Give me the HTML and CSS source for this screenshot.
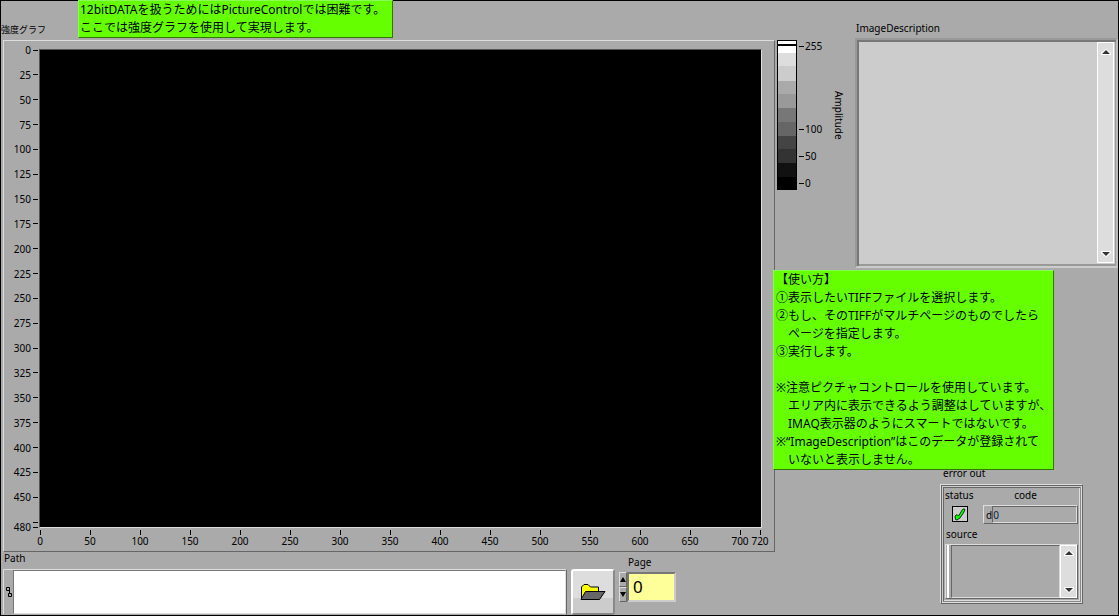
FILE: index.html
```html
<!DOCTYPE html>
<html lang="ja">
<head>
<meta charset="utf-8">
<title>TIFF Viewer</title>
<link rel="stylesheet" href="styles.css">
</head>
<body>
<main class="panel">
  <section class="main">
    <h1 class="graph-title">強度グラフ</h1>
    <div class="graph">
      <div class="y-axis">
        <span>0</span><span>25</span><span>50</span><span>75</span><span>100</span><span>125</span><span>150</span><span>175</span><span>200</span><span>225</span><span>250</span><span>275</span><span>300</span><span>325</span><span>350</span><span>375</span><span>400</span><span>425</span><span>450</span><span></span><span>480</span>
      </div>
      <div class="plot"></div>
      <div class="x-axis">
        <span>0</span><span>50</span><span>100</span><span>150</span><span>200</span><span>250</span><span>300</span><span>350</span><span>400</span><span>450</span><span>500</span><span>550</span><span>600</span><span>650</span><span>700</span><span>720</span>
      </div>
    </div>
    <div class="controls">
      <div class="path-field">
        <label for="path">Path</label>
        <div class="path-box">
          <svg class="path-icon" width="8" height="12" viewBox="0 0 8 12" fill="none" stroke="#000"><path d="M1.5 1.5h3v3h-3zM3.5 7.5h3v3h-3zM4.5 3.5v4"/></svg>
          <input id="path" type="text">
        </div>
      </div>
      <button class="browse" type="button" aria-label="Browse">
        <svg width="26" height="18" viewBox="0 0 26 18" stroke="#000"><path fill="#ff0" d="M1.500 16V4L4 1.500h4L10.500 4h8v5"/><path fill="#666" d="M1 16.500L5.500 8.500H25L19.500 16.500z"/></svg>
      </button>
      <div class="page-field">
        <label for="page">Page</label>
        <div class="spinner">
          <div class="steps">
            <button type="button" aria-label="Increase"><svg width="6" height="5" viewBox="0 0 6 5"><path d="M3 0L6 5H0z"/></svg></button>
            <button type="button" aria-label="Decrease"><svg width="6" height="5" viewBox="0 0 6 5"><path d="M0 0H6L3 5z"/></svg></button>
          </div>
          <input id="page" type="text" value="0">
        </div>
      </div>
    </div>
  </section>

  <section class="scale">
    <div class="ramp">
      <i class="marker"></i><i class="g1"></i><i class="g2"></i><i class="g3"></i><i class="g4"></i><i class="g5"></i><i class="g6"></i><i class="g7"></i><i class="g8"></i><i class="g9"></i><i class="g10"></i><i class="g11"></i>
    </div>
    <div class="ramp-labels">
      <span>255</span><span>100</span><span>50</span><span>0</span>
    </div>
    <div class="scale-name">Amplitude</div>
  </section>

  <section class="side">
    <label for="description">ImageDescription</label>
    <div class="description">
      <textarea id="description"></textarea>
      <div class="scrollbar">
        <svg width="10" height="6" viewBox="0 0 10 6"><path fill="#fff" d="M5 0L10 4V6H0V4z"/><path fill="#333" d="M5 1L9 5H1z"/></svg>
        <svg width="10" height="6" viewBox="0 0 10 6"><path fill="#fff" d="M0 0H10V2L5 6L0 2z"/><path fill="#333" d="M1 1H9L5 5z"/></svg>
      </div>
    </div>
    <div class="error">
      <h2 class="error-title">error out</h2>
      <div class="cluster">
        <div class="status">
          <span>status</span>
          <span class="check" role="img" aria-label="OK"><svg width="12" height="13" viewBox="0 0 12 13"><path fill="#0f0" stroke="#000" stroke-width=".8" d="M1 8L3 6.500L4.500 8L8.500 1.500L10 .8L11 1.500L10 4L6 10L3 12L1.500 11.500z"/></svg></span>
        </div>
        <div class="code">
          <label for="code">code</label>
          <div class="code-box"><span>d</span><input id="code" type="text" value="0" readonly></div>
        </div>
        <div class="source">
          <label for="source">source</label>
          <div class="source-box">
            <textarea id="source" readonly></textarea>
            <div class="scrollbar">
              <svg width="10" height="6" viewBox="0 0 10 6"><path fill="#fff" d="M5 0L10 4V6H0V4z"/><path fill="#333" d="M5 1L9 5H1z"/></svg>
              <svg width="10" height="6" viewBox="0 0 10 6"><path fill="#fff" d="M0 0H10V2L5 6L0 2z"/><path fill="#333" d="M1 1H9L5 5z"/></svg>
            </div>
          </div>
        </div>
      </div>
    </div>
  </section>

  <aside class="note note-top">12bitDATAを扱うためにはPictureControlでは困難です。
ここでは強度グラフを使用して実現します。</aside>
  <aside class="note note-usage">【使い方】
①表示したいTIFFファイルを選択します。
②もし、そのTIFFがマルチページのものでしたら
　ページを指定します。
③実行します。

※注意ピクチャコントロールを使用しています。
　エリア内に表示できるよう調整はしていますが、
　IMAQ表示器のようにスマートではないです。
※“ImageDescription”はこのデータが登録されて
　いないと表示しません。</aside>
</main>
</body>
</html>
```

FILE: styles.css
```css
* { box-sizing: border-box; }

body {
  margin: 0;
  background: #aaa;
  color: #000;
  font: 10px/12px "Noto Sans", "Noto Sans CJK JP", sans-serif;
}

input, textarea, button {
  margin: 0;
  padding: 0;
  border: 0;
  border-radius: 0;
  background: none;
  color: inherit;
  font: inherit;
  outline: 0;
  resize: none;
  min-width: 0;
}

label { display: block; }
h1, h2 { margin: 0; font: inherit; }
svg { display: block; }

.panel {
  position: relative;
  display: flex;
  min-height: 100vh;
  border: 1px solid #000;
}

/* Graph and file controls */
.main {
  flex: 1;
  min-width: 0;
  display: flex;
  flex-direction: column;
}

.graph-title { padding: 23px 0 4px; font-size: 9px; }

.graph {
  flex: 1;
  margin-left: 2px;
  display: grid;
  grid-template: minmax(0, 1fr) 23px / 35px minmax(0, 1fr);
  padding: 8px 12px 0 0;
  border: 1px solid;
  border-color: #ddd #666 #666 #ddd;
}

.plot {
  background: #000;
  border: 1px solid;
  border-color: #555 #ddd #ddd #555;
}

.y-axis {
  display: grid;
  grid-template-rows: repeat(19, minmax(0, 25fr)) minmax(0, 5fr) 0;
  padding: 1px 1px 1px 0;
}

.y-axis span {
  display: flex;
  justify-content: flex-end;
  align-items: center;
  gap: 2px;
  height: 0;
}

.y-axis span::after {
  content: "";
  width: 5px;
  height: 1px;
  background: #000;
}

.x-axis {
  grid-column: 2;
  display: grid;
  grid-template-columns: repeat(14, minmax(0, 50fr)) minmax(0, 20fr) 0;
  padding: 2px 3px 0 0;
}

.x-axis span {
  display: flex;
  flex-direction: column;
  align-items: center;
  width: 30px;
  margin-left: -14px;
}

.x-axis span::before {
  content: "";
  width: 1px;
  height: 5px;
  background: #000;
}

.controls {
  display: flex;
  gap: 4px;
  margin-left: 2px;
  padding-right: 99px;
}

.path-field { flex: 1; }
.path-field label { padding: 0 0 5px 1px; }

.path-box {
  display: flex;
  align-items: center;
  height: 46px;
  border: 1px solid;
  border-color: #ddd #666 transparent #ddd;
}

.path-icon { flex: none; margin-left: 1px; }

.path-box input {
  flex: 1;
  height: 44px;
  background: #fff;
  border: 1px solid;
  border-color: #777 #ddd #ddd #777;
}

.browse {
  align-self: flex-end;
  display: grid;
  place-items: center;
  width: 44px;
  height: 46px;
  background: linear-gradient(#ddd 65%, #ccc 65%);
  border: 2px solid;
  border-color: #fff #888 #888 #fff;
  border-radius: 3px;
}

.page-field { padding-top: 4px; }
.page-field label { padding: 0 0 4px 9px; }
.spinner { display: flex; }
.steps { display: grid; width: 8px; height: 30px; }

.steps button {
  display: grid;
  place-items: center;
  border: 1px solid;
  border-color: #ddd #666 #666 #ddd;
}

.spinner input {
  width: 49px;
  height: 30px;
  padding: 0 0 2px 4px;
  background: #ff9;
  border: 2px solid;
  border-color: #777 #ccc #ccc #777;
  font-size: 17px;
  line-height: 24px;
}

/* Intensity scale */
.scale {
  display: flex;
  align-items: flex-start;
  width: 80px;
  padding: 39px 0 0 2px;
}

.ramp {
  display: grid;
  grid-template-rows: 5px 7px 13px 15px 13px 14px 14px 14px 13px 14px 14px 12px;
  width: 20px;
  border: 1px solid #000;
}

.marker { background: #fff; border-bottom: 2px solid #000; }
.g1 { background: #fff; }
.g2 { background: #ddd; }
.g3 { background: #ccc; }
.g4 { background: #aaa; }
.g5 { background: #999; }
.g6 { background: #777; }
.g7 { background: #666; }
.g8 { background: #444; }
.g9 { background: #333; }
.g10 { background: #111; }
.g11 { background: #000; }

.ramp-labels {
  display: grid;
  grid-template-rows: 83px 27px 27px 12px;
  width: 36px;
  padding-left: 2px;
}

.ramp-labels span {
  display: flex;
  align-items: center;
  gap: 1px;
  height: 12px;
}

.ramp-labels span::before {
  content: "";
  width: 5px;
  height: 1px;
  background: #000;
}

.scale-name {
  padding-top: 51px;
  writing-mode: vertical-rl;
}

/* Description and error cluster */
.side {
  width: 263px;
  display: flex;
  flex-direction: column;
}

.side > label { padding: 21px 0 4px 1px; }

.description {
  display: flex;
  height: 230px;
  background: #ccc;
  border: 2px solid;
  border-color: #999 #bbb #ccc #999;
  box-shadow: inset 2px 2px #777, inset -1px -2px #999;
}

.description textarea {
  flex: 1;
}

.scrollbar {
  flex: none;
  display: flex;
  flex-direction: column;
  justify-content: space-between;
  align-items: center;
  width: 17px;
  padding: 6px 0 5px;
  background: #ddd;
  border: 1px solid #fff;
}

.description .scrollbar { margin: 2px 2px 3px 0; }

.error {
  width: 143px;
  margin: 199px 0 10px 85px;
}

.error-title { padding: 0 0 5px 3px; }

.cluster {
  display: grid;
  grid-template-columns: 38px minmax(0, 1fr);
  padding: 4px;
  border: 1px solid;
  border-color: #ddd #666 #666 #ddd;
  box-shadow: inset 1px 1px #666, inset -1px -1px #ddd, inset 2px 2px #ccc, inset -2px -2px #888, inset 3px 3px #666, inset -3px -3px #ddd;
}

.check {
  display: grid;
  place-items: center;
  width: 16px;
  height: 16px;
  margin: 5px 0 0 7px;
  background: #ccc;
  border: 1px solid #000;
}

.code label { text-align: center; padding-right: 10px; }

.code-box {
  display: flex;
  align-items: center;
  height: 19px;
  margin-top: 4px;
  padding-left: 2px;
  border: 1px solid;
  border-color: #ddd #666 #666 #ddd;
}

.code-box input {
  flex: 1;
  height: 17px;
  border: 1px solid;
  border-color: #666 #ddd #ddd #666;
  color: #024;
}

.source { grid-column: 1 / 3; margin-top: 4px; }
.source label { padding: 0 0 4px 1px; }

.source-box {
  display: flex;
  height: 55px;
  border: 1px solid;
  border-color: #ddd #666 #666 #ddd;
  padding-left: 1px;
}

.source-box textarea {
  flex: 1;
  margin-left: 4px;
  border: 1px solid;
  border-color: #666 #ddd #ddd #666;
  box-shadow: -2px 0 #aaa, -4px 0 #fff;
}

.source-box .scrollbar { padding: 4px 0; }

/* Notes laid over the panel */
.note {
  position: absolute;
  padding: 0 7px 0 1px;
  background: #6f0;
  border: 1px solid;
  border-color: #8f5 #370 #370 #8f5;
  font-size: 12px;
  line-height: 18px;
  white-space: pre;
}

.note-top { top: -1px; left: 77px; }
.note-usage { top: 269px; right: 64px; width: 281px; padding-left: 2px; }
```
